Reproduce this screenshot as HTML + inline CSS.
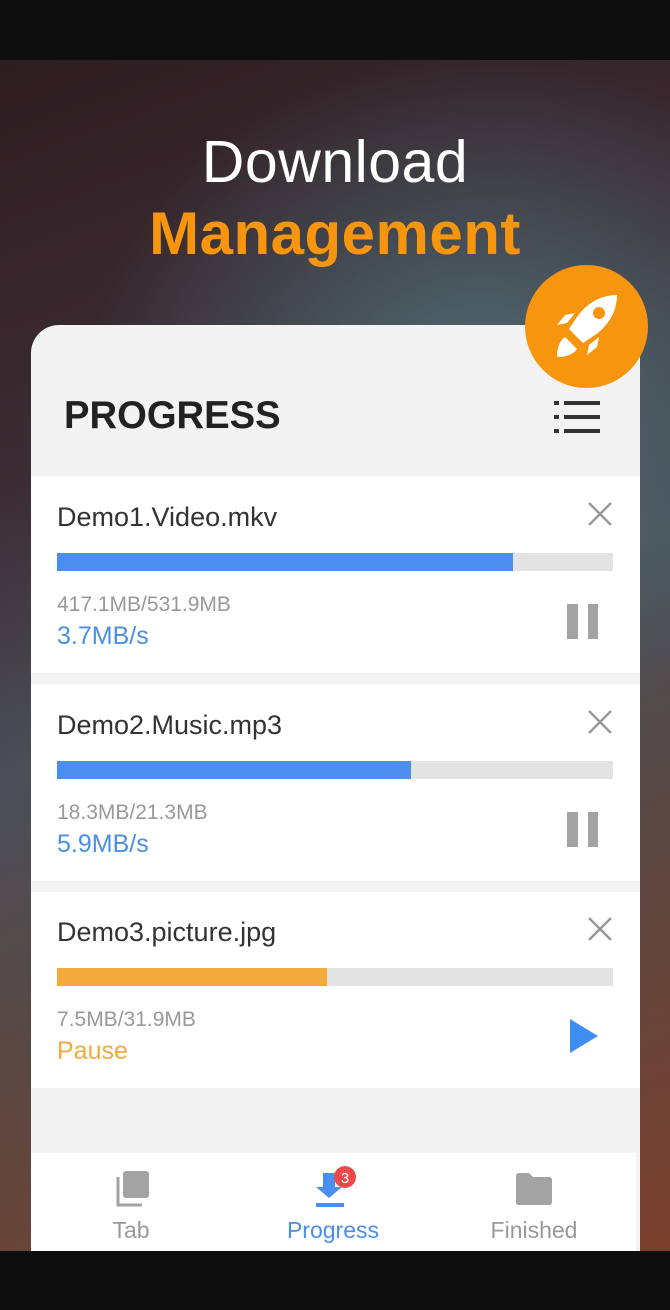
<!DOCTYPE html>
<html><head><meta charset="utf-8"><style>
*{margin:0;padding:0;box-sizing:border-box}
body{width:670px;height:1310px;position:relative;overflow:hidden;font-family:"Liberation Sans",sans-serif;background:#0e0e0e}
.bg{position:absolute;left:0;top:60px;width:670px;height:1191px;
background:radial-gradient(ellipse 400px 340px at 480px 330px,#4f6b74 0%,rgba(79,107,116,0) 100%),
linear-gradient(160deg,#2e1d21 0%,#3d2c33 30%,#4a4f58 50%,#5a4843 70%,#7a3f2c 100%)}
.t1{position:absolute;top:128px;left:0;width:670px;text-align:center;color:#fff;font-size:59px;letter-spacing:0.5px}
.t2{position:absolute;top:199px;left:0;width:670px;text-align:center;color:#f7960e;font-size:60px;font-weight:bold;letter-spacing:0.5px}
.card{position:absolute;left:31px;top:325px;width:609px;height:926px;background:#f3f3f3;border-radius:28px 0 0 0;overflow:hidden}
.h{position:absolute;left:33px;top:69px;font-size:39px;font-weight:bold;color:#222;transform:scaleX(.98);transform-origin:left}
.item{position:absolute;left:0;width:609px;height:196px;background:#fff}
.name{position:absolute;left:26px;top:25px;font-size:27px;color:#333}
.bar{position:absolute;left:26px;top:76px;width:556px;height:18px;background:#e3e3e3}
.bar div{height:18px}
.sz{position:absolute;left:26px;top:116px;font-size:21px;color:#999}
.sp{position:absolute;left:26px;top:145px;font-size:25px;color:#4a90e2}
.x{position:absolute;left:556px;top:24px}
.ic{position:absolute;left:534px;top:125px}
.nav{position:absolute;left:0;top:828px;width:605px;height:98px;background:#fff}
.nl{position:absolute;top:64px;font-size:23px;width:200px;text-align:center}
.fab{position:absolute;left:525px;top:265px;width:123px;height:123px;border-radius:50%;background:#f7960e}
</style></head><body>
<div class="bg"></div>
<div class="t1">Download</div>
<div class="t2">Management</div>
<div class="card">
<div class="h">PROGRESS</div>
<svg style="position:absolute;left:523px;top:76px" width="48" height="34"><g fill="#333"><rect x="0" y="0" width="5" height="4"/><rect x="10" y="0" width="36" height="4"/><rect x="0" y="14" width="5" height="4"/><rect x="10" y="14" width="36" height="4"/><rect x="0" y="28" width="5" height="4"/><rect x="10" y="28" width="36" height="4"/></g></svg>

<div class="item" style="top:152px">
<div class="name">Demo1.Video.mkv</div>
<svg class="x" width="26" height="26"><path d="M2 2L24 24M24 2L2 24" stroke="#999" stroke-width="2.5"/></svg>
<div class="bar"><div style="width:456px;background:#4a8ef0"></div></div>
<div class="sz">417.1MB/531.9MB</div><div class="sp">3.7MB/s</div>
<svg class="ic" width="34" height="38"><rect x="2" y="2" width="11" height="35" fill="#a3a3a3"/><rect x="23" y="2" width="10" height="35" fill="#a3a3a3"/></svg>
</div>
<div class="item" style="top:360px">
<div class="name">Demo2.Music.mp3</div>
<svg class="x" width="26" height="26"><path d="M2 2L24 24M24 2L2 24" stroke="#999" stroke-width="2.5"/></svg>
<div class="bar"><div style="width:354px;background:#4a8ef0"></div></div>
<div class="sz">18.3MB/21.3MB</div><div class="sp">5.9MB/s</div>
<svg class="ic" width="34" height="38"><rect x="2" y="2" width="11" height="35" fill="#a3a3a3"/><rect x="23" y="2" width="10" height="35" fill="#a3a3a3"/></svg>
</div>
<div class="item" style="top:567px">
<div class="name">Demo3.picture.jpg</div>
<svg class="x" width="26" height="26"><path d="M2 2L24 24M24 2L2 24" stroke="#999" stroke-width="2.5"/></svg>
<div class="bar"><div style="width:270px;background:#f2ab3a"></div></div>
<div class="sz">7.5MB/31.9MB</div><div class="sp" style="color:#f2ab3a">Pause</div>
<svg class="ic" width="34" height="38"><path d="M5 2L33 19L5 36Z" fill="#3d8ef0"/></svg>
</div>

<div class="nav">
<svg style="position:absolute;left:82px;top:18px" width="36" height="36"><path d="M5 6v28h24" stroke="#a3a3a3" stroke-width="3" fill="none"/><rect x="10" y="0" width="26" height="27" rx="3" fill="#a3a3a3"/></svg>
<div class="nl" style="left:0;color:#999">Tab</div>
<svg style="position:absolute;left:285px;top:12px" width="46" height="42"><path d="M7 8h12v14h7L13 33 0 22h7z" fill="#4a8ef0"/><rect x="0" y="38" width="28" height="4" fill="#4a8ef0"/><circle cx="29" cy="12" r="11" fill="#ee4a4a"/><text x="29" y="18" font-size="15" fill="#fff" text-anchor="middle" font-family="Liberation Sans">3</text></svg>
<div class="nl" style="left:202px;color:#4a8ef0">Progress</div>
<svg style="position:absolute;left:485px;top:20px" width="36" height="32"><path d="M0 3q0-3 3-3h10l4 4h16q3 0 3 3v22q0 3-3 3H3q-3 0-3-3z" fill="#a3a3a3"/></svg>
<div class="nl" style="left:403px;color:#999">Finished</div>
</div>
</div>
<div class="fab"><svg width="123" height="123" viewBox="0 0 123 123"><path d="M92 30C76 30 62 38 52 52l-8 12 14 14 12-8c14-10 22-24 22-40z" fill="#fff"/><circle cx="74" cy="48" r="6" fill="#f7960e"/><path d="M42 58l-10 2 8-10 10-2z M64 80l-2 10 10-8 2-10z" fill="#fff"/><path d="M40 72c-6 4-8 12-8 20 8 0 16-2 20-8z" fill="#fff"/></svg></div>
</body></html>
